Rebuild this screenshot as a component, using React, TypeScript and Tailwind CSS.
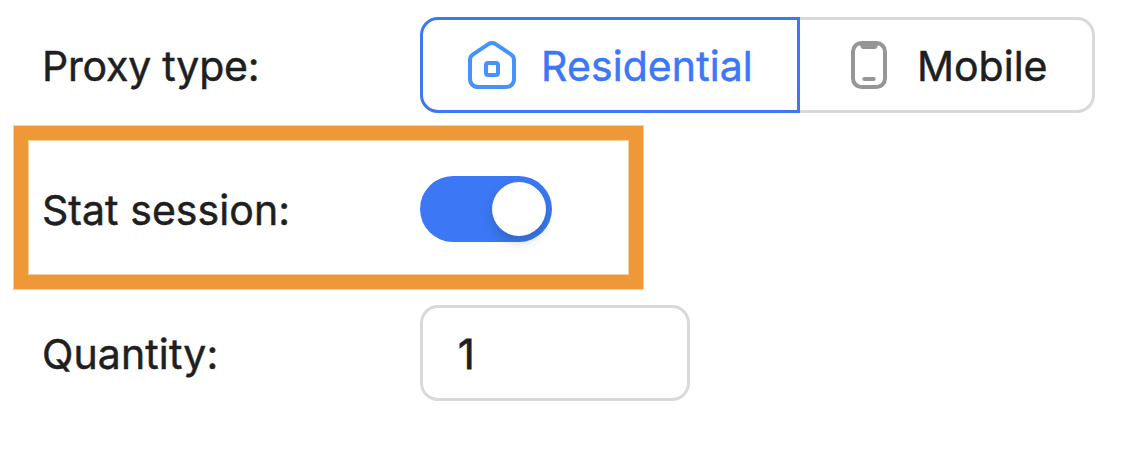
import type { ReactNode } from "react";

function HouseIcon() {
  return (
    <svg width="48" height="48" viewBox="0 0 48 48" fill="none" stroke="#4791fa" strokeWidth="4" strokeLinejoin="round" className="shrink-0">
      <path d="M2 18.800c0-2.400 1.100-4.100 3-5.400L20 3.300c2.700-1.800 5.300-1.800 8 0l15 10.100c1.900 1.300 3 3 3 5.400V37.500c0 5.300-3.200 8.500-8.500 8.500h-27C5.200 46 2 42.800 2 37.500Z" />
      <rect x="18" y="22" width="12" height="12" rx="2" />
    </svg>
  );
}

function PhoneIcon() {
  return (
    <svg width="36" height="48" viewBox="0 0 36 48" fill="none" stroke="#969696" strokeWidth="4" className="shrink-0">
      <rect x="2" y="2" width="32" height="44" rx="8.500" />
      <path d="M7.500 2h21v2c-1.200 0-1.800.6-2.100 1.600C26 7.300 25.400 8 24 8H12c-1.400 0-2-.7-2.400-2.400C9.300 4.600 8.700 4 7.500 4Z" fill="#969696" stroke="none" />
      <path d="M13.300 38h9.400" strokeLinecap="round" />
    </svg>
  );
}

function Label({ children, className }: { children: ReactNode; className: string }) {
  return <div className={`w-[378px] shrink-0 whitespace-nowrap pt-px ${className}`}>{children}</div>;
}

export default function App() {
  return (
    <main className="h-[452px] w-[1146px] overflow-hidden bg-white pt-[17px] font-['Inter',sans-serif] text-[41px] leading-[66px] text-[#1f1f1f] [-webkit-text-stroke:0.5px_currentColor]">
      <div className="flex h-24 items-center pl-[42px]">
        <Label className="tracking-[-0.2px]">Proxy type:</Label>
        <div className="flex h-24">
          <button className="flex w-[380px] items-center rounded-l-[18px] border-[3px] border-[#3c78f6] pl-[45px] text-[#3c78f6]">
            <HouseIcon />
            <span className="ml-6 pt-px pl-px tracking-[0.1px]">Residential</span>
          </button>
          <button className="flex w-[295px] items-center rounded-r-[18px] border-[3px] border-l-0 border-[#d9d9d9] pl-[51px]">
            <PhoneIcon />
            <span className="ml-[30px] pt-px">Mobile</span>
          </button>
        </div>
      </div>

      <div className="mt-[13px] ml-[14px] flex h-[163px] w-[629px] items-center border-[14px] border-[#ee9837] pt-[3px] pl-[14px] shadow-[0_0_0_1px_#f8cf9d,inset_0_0_0_1px_#f8cf9d]">
        <Label className="tracking-[0.06px]">Stat session:</Label>
        <button role="switch" aria-checked="true" aria-label="Stat session" className="flex h-[66px] w-[132px] items-center justify-end rounded-full bg-[#3c78f6] pr-[6px]">
          <span className="size-[54px] rounded-full bg-white shadow-[0_6px_12px_rgba(0,35,11,0.2)]" />
        </button>
      </div>

      <div className="mt-4 flex h-24 items-center pl-[42px]">
        <Label className="tracking-[0.12px]">Quantity:</Label>
        <input aria-label="Quantity" defaultValue="1" className="h-24 w-[270px] rounded-[18px] border-[3px] border-[#d9d9d9] pr-[33px] pl-[35px] pt-[2px] outline-none [-webkit-text-stroke:0.8px_currentColor]" />
      </div>
    </main>
  );
}
